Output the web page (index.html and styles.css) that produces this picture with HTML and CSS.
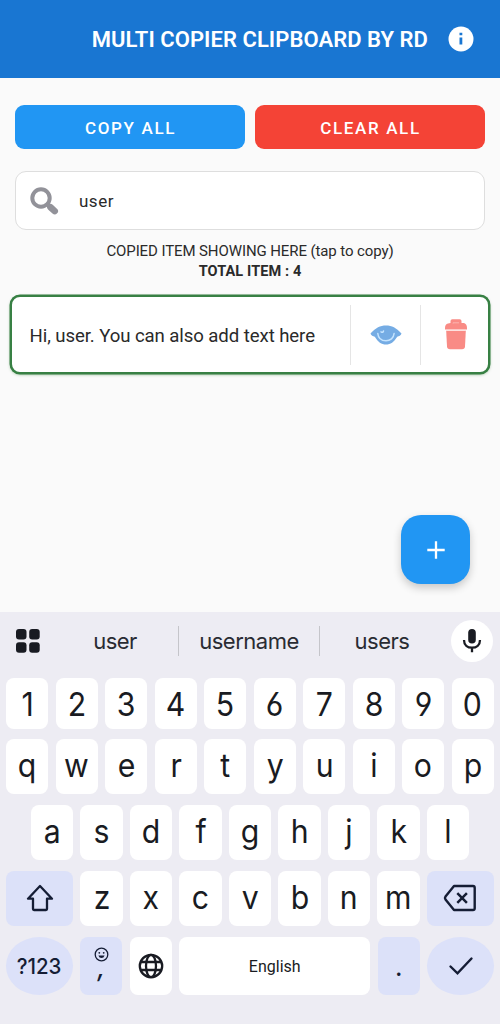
FILE: index.html
```html
<!DOCTYPE html>
<html lang="en">
<head>
<meta charset="utf-8">
<title>Multi Copier Clipboard</title>
<link rel="stylesheet" href="styles.css">
</head>
<body>
<header class="app-bar">
  <h1 class="title">MULTI COPIER CLIPBOARD BY RD</h1>
  <svg class="info" viewBox="0 0 26 26"><circle cx="13" cy="13" r="12.500" fill="#fff"/><path d="M11.500 6.700h2.800v2.600h-2.800zM11.500 11.500h2.800v7h-2.800z" fill="#1976d2"/></svg>
</header>
<main class="content">
  <div class="actions">
    <button class="btn copy">COPY ALL</button>
    <button class="btn clear">CLEAR ALL</button>
  </div>
  <div class="search">
    <svg class="lens" viewBox="0 0 32 32"><circle cx="12" cy="12" r="8.700" fill="none" stroke="#929299" stroke-width="4"/><path d="M18.500 18.500l3 3" stroke="#929299" stroke-width="4"/><path d="M21.500 21.300l4.200 3.800" stroke="#929299" stroke-width="6.600" stroke-linecap="round"/></svg>
    <span class="query">user</span>
  </div>
  <p class="hint">COPIED ITEM SHOWING HERE (tap to copy)</p>
  <p class="total">TOTAL ITEM : 4</p>
  <article class="card">
    <span class="item-text">Hi, user. You can also add text here</span>
    <span class="cell"><svg class="eye" viewBox="0 0 34 22"><path d="M1.500 9.500C7 3.800 11 1.500 17 1.500S27 3.800 32.500 9.500c-.5 2-2.500 2.700-4.300 3.200C25 18 21.500 20.500 17 20.500S9 18 5.800 12.700C4 12.200 2 11.500 1.500 9.500z" fill="#75ace4"/><path d="M8.800 9.500c.5 5 4 7.300 8.200 7.300s7.700-2.800 8.100-7.300M12 7.800q2 1.200 2.500-.8" fill="none" stroke="#c5e4ff" stroke-width="1.500" stroke-linecap="round"/></svg></span>
    <span class="cell last"><svg class="bin" viewBox="0 0 24 32"><path d="M6.500 5V3q0-1.800 1.800-1.800h7.400q1.800 0 1.800 1.800v2h2.500Q23 6 23 10v1.600H1V10Q1 6 4 5.500z" fill="#f98b85"/><path d="M2.200 13h19.600l-.8 15.500q-.2 2.700-3 2.700H6q-2.800 0-3-2.700z" fill="#f98b85"/><path d="M9 5.500V4.800h6" fill="none" stroke="#fbb4ae"/><path d="M2 12.300h20" stroke="#fddbd8"/></svg></span>
  </article>
  <button class="fab"><svg viewBox="0 0 20 20"><path d="M10 1.300v17.400M1.300 10h17.400" stroke="#fff" stroke-width="2.300"/></svg></button>
</main>
<section class="keyboard">
  <div class="suggestions">
    <svg class="grid-icon" viewBox="0 0 24 24" fill="#191b22"><rect width="10.500" height="10.500" rx="3"/><rect x="13.200" width="10.500" height="10.500" rx="3"/><rect y="13.200" width="10.500" height="10.500" rx="3"/><rect x="13.200" y="13.200" width="10.500" height="10.500" rx="3"/></svg>
    <span class="word">user</span><span class="word middle">username</span><span class="word third">users</span>
    <span class="mic"><svg viewBox="0 0 20 26"><rect x="6.200" y="1" width="7.600" height="14.600" rx="3.800" fill="#191b22"/><path d="M2 12c0 5.200 3.600 7.700 8 7.700s8-2.500 8-7.700M10 19.700v4.500" fill="none" stroke="#191b22" stroke-width="2.300"/></svg></span>
  </div>
  <div class="row numbers"><b><i>1</i></b><b><i>2</i></b><b><i>3</i></b><b><i>4</i></b><b><i>5</i></b><b><i>6</i></b><b><i>7</i></b><b><i>8</i></b><b><i>9</i></b><b><i>0</i></b></div>
  <div class="row"><b><i>q</i></b><b><i>w</i></b><b><i>e</i></b><b><i>r</i></b><b><i>t</i></b><b><i>y</i></b><b><i>u</i></b><b><i>i</i></b><b><i>o</i></b><b><i>p</i></b></div>
  <div class="row"><b><i>a</i></b><b><i>s</i></b><b><i>d</i></b><b><i>f</i></b><b><i>g</i></b><b><i>h</i></b><b><i>j</i></b><b><i>k</i></b><b><i>l</i></b></div>
  <div class="row">
    <b class="mod wide"><svg width="30" height="30" viewBox="0 0 30 30"><path d="M15 3L27 15.700H22V26q0 1-1 1H9q-1 0-1-1V15.700H3z" fill="none" stroke="#151d35" stroke-width="2.300" stroke-linejoin="round"/></svg></b>
    <b><i>z</i></b><b><i>x</i></b><b><i>c</i></b><b><i>v</i></b><b><i>b</i></b><b><i>n</i></b><b><i>m</i></b>
    <b class="mod wide"><svg width="34" height="28" viewBox="0 0 34 28"><path d="M11 2H30q1.700 0 1.700 1.700V24.300Q31.700 26 30 26H11L2.500 15.500q-1-1.500 0-3z" fill="none" stroke="#151d35" stroke-width="2.400" stroke-linejoin="round"/><path d="M14.300 9.200l9.600 9.600M23.900 9.200l-9.600 9.600" stroke="#151d35" stroke-width="2.500"/></svg></b>
  </div>
  <div class="row bottom">
    <b class="mod wide round symbols"><i>?123</i></b>
    <b class="mod comma"><svg width="15" height="15" viewBox="0 0 15 15"><circle cx="7.500" cy="7.500" r="6.300" fill="none" stroke="#151d35" stroke-width="1.300"/><circle cx="5.300" cy="5.800" r=".9" fill="#151d35"/><circle cx="9.700" cy="5.800" r=".9" fill="#151d35"/><path d="M4.400 8.500h6.200q-.8 2.500-3.100 2.500T4.400 8.500z" fill="#151d35"/></svg><span>,</span></b>
    <b><svg width="26" height="26" viewBox="0 0 26 26" fill="none" stroke="#191b22" stroke-width="2.300"><circle cx="13" cy="13" r="11.200"/><ellipse cx="13" cy="13" rx="5" ry="11.200"/><path d="M2.500 9h21M2.500 17h21"/></svg></b>
    <b class="space">English</b>
    <b class="mod dot">.</b>
    <b class="mod wide round"><svg width="26" height="20" viewBox="0 0 26 20"><path d="M2.500 10.500l7 6.800L23.500 2.500" fill="none" stroke="#151d35" stroke-width="2.400" stroke-linecap="round"/></svg></b>
  </div>
</section>
</body>
</html>
```
FILE: styles.css
```css
* { box-sizing: border-box; }
body { margin: 0; width: 500px; height: 1024px; overflow: hidden; background: #fafafa; color: #2a2a2a; font-family: Roboto, sans-serif; }
svg { display: block; flex: none; }
button { border: 0; font-family: inherit; }
p { margin: 0; }
.app-bar { height: 78px; background: #1976d2; display: flex; align-items: center; justify-content: flex-end; padding-right: 26px; gap: 20px; }
.title { margin: 0; color: #fff; font-size: 22px; font-weight: 600; letter-spacing: .05px; line-height: 26px; white-space: nowrap; padding-top: 2px; }
.info { width: 26px; height: 26px; }
.content { height: 534px; padding: 27px 10px 0; display: flex; flex-direction: column; }
.actions { display: flex; gap: 10px; padding: 0 5px; }
.btn { flex: 1; height: 44px; border-radius: 9px; color: #fff; font-size: 17px; font-weight: 500; letter-spacing: 1.650px; padding: 2px 0 0 1px; }
.copy { background: #2196f3; }
.clear { background: #f44336; }
.search { height: 59px; margin: 22px 5px 0; border: 1px solid #dedede; border-radius: 11px; background: #fff; display: flex; align-items: center; padding-left: 13px; gap: 18px; }
.lens { width: 32px; height: 32px; margin-top: 2px; }
.query { font-size: 17px; letter-spacing: .5px; padding-top: 1px; }
.hint { margin-top: 11px; text-align: center; font-size: 15px; letter-spacing: -.1px; line-height: 20px; }
.total { text-align: center; font-size: 14.500px; letter-spacing: .1px; font-weight: 700; line-height: 20px; padding-top: 1px; }
.card { margin-top: 13px; height: 79px; flex: none; border: 2px solid #388044; border-radius: 10px; background: #fff; box-shadow: 0 0 0 .5px #388044, 0 1px 3px #2e7d3266; display: flex; align-items: center; }
.item-text { flex: none; width: 338px; padding: 2px 0 0 17.500px; font-size: 18.600px; letter-spacing: -.08px; white-space: nowrap; }
.cell { flex: none; width: 70px; height: 60px; border-left: 1px solid #e5e5e5; display: flex; align-items: center; justify-content: center; }
.last { width: 68px; }
.eye { width: 34px; height: 22px; margin-top: 1px; }
.bin { width: 24px; height: 32px; margin: -2px 0 0 3px; }
.fab { align-self: flex-end; flex: none; width: 69px; height: 69px; margin: 141px 20px 0 0; border-radius: 20px; padding: 0; background: #2196f3; box-shadow: 0 4px 8px #0003; display: flex; align-items: center; justify-content: center; }
.fab svg { width: 20px; height: 20px; }
.keyboard { height: 412px; background: #edecf3; padding: 0 6px; font-family: Inter, sans-serif; color: #191b22; display: flex; flex-direction: column; }
.suggestions { height: 66px; display: flex; align-items: center; padding: 0 1px 8px 10px; }
.grid-icon { width: 24px; height: 24px; }
.word { width: 138px; text-align: center; font-size: 22px; letter-spacing: -.5px; color: #292b32; line-height: 30px; padding-left: 12px; }
.middle { width: 142px; padding: 0; border-left: 1px solid #c5c5ca; border-right: 1px solid #c5c5ca; }
.third { width: 131px; padding: 0 7px 0 0; }
.mic { width: 42px; height: 42px; flex: none; border-radius: 50%; background: #fff; display: flex; align-items: center; justify-content: center; }
.mic svg { width: 20px; height: 26px; }
.row { display: flex; justify-content: center; gap: 7.300px; height: 55px; flex: none; margin-bottom: 11px; }
.row b { width: 42.200px; flex: none; border-radius: 8px; background: #fff; font-weight: 400; font-size: 32.500px; display: flex; align-items: center; justify-content: center; padding-bottom: 3px; font-feature-settings: "cv03", "cv04"; }
.row i { font-style: normal; transform: scaleX(.93); }
.numbers { height: 51px; margin-bottom: 10px; }
.row.numbers b { padding: 2px 0 0; }
.row .wide { width: 67px; padding-bottom: 1px; }
.row .mod { background: #dce1f9; color: #151d35; }
.row.bottom { height: 58px; }
.row.bottom b { padding-bottom: 0; }
.row .round { border-radius: 34px / 29px; }
.row .symbols { font-size: 22px; font-weight: 500; }
.row.bottom .comma { flex-direction: column; justify-content: flex-start; padding-top: 10px; }
.comma span { margin-top: -4px; font-size: 25px; line-height: 20px; font-style: italic; font-weight: 500; }
.row .space { width: 191px; font-family: Roboto, sans-serif; font-size: 16px; }
.row .dot { font-size: 26px; }
```
